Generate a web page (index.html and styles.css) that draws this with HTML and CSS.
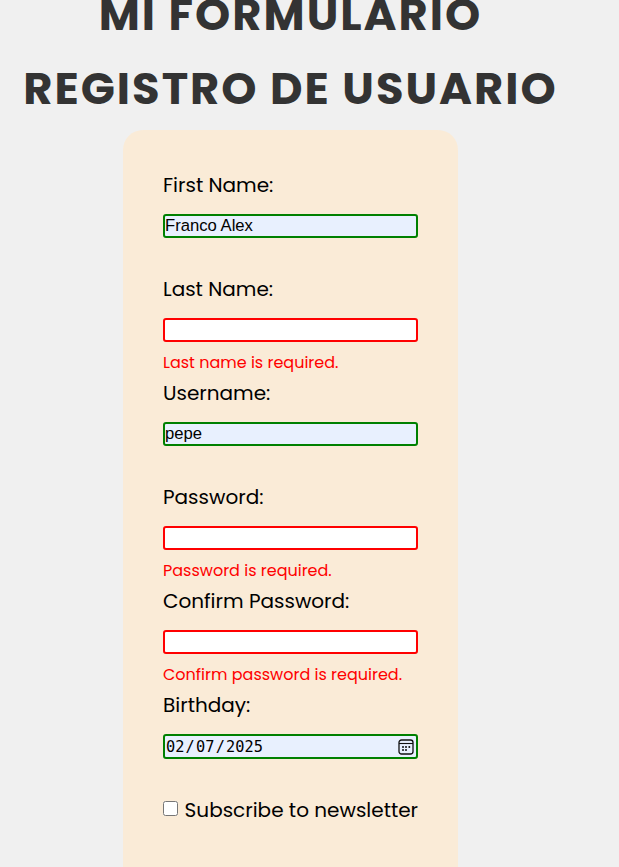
FILE: index.html
```html
<!DOCTYPE html>
<html lang="es">
<head>
<meta charset="utf-8">
<title>Mi formulario</title>
<link rel="stylesheet" href="styles.css">
</head>
<body>
<main class="page">
  <h1 class="title title-top">MI FORMULARIO</h1>
  <h1 class="title">REGISTRO DE USUARIO</h1>
  <form class="card">
    <div class="field">
      <label class="label" for="first">First Name:</label>
      <input class="input valid" id="first" type="text" value="Franco Alex">
    </div>
    <div class="field">
      <label class="label" for="last">Last Name:</label>
      <input class="input invalid" id="last" type="text">
      <p class="error">Last name is required.</p>
    </div>
    <div class="field">
      <label class="label" for="user">Username:</label>
      <input class="input valid" id="user" type="text" value="pepe">
    </div>
    <div class="field">
      <label class="label" for="pass">Password:</label>
      <input class="input invalid" id="pass" type="password">
      <p class="error">Password is required.</p>
    </div>
    <div class="field">
      <label class="label" for="confirm">Confirm Password:</label>
      <input class="input invalid" id="confirm" type="password">
      <p class="error">Confirm password is required.</p>
    </div>
    <div class="field">
      <label class="label">Birthday:</label>
      <div class="input valid date">
        <span>02<span class="sep">/</span>07<span class="sep">/</span>2025</span>
        <svg class="calendar" viewBox="0 0 16 16" width="16" height="16">
          <rect x="1" y="1" width="14" height="14" rx="2.5" fill="none" stroke="#111" stroke-width="1.3"/>
          <path d="M1 4.5h14" stroke="#111" stroke-width="1.1"/>
          <g fill="#111"><circle cx="5" cy="8" r="1"/><circle cx="8" cy="8" r="1"/><circle cx="11.3" cy="8" r="1"/><circle cx="5" cy="11" r="1"/><circle cx="8" cy="11" r="1"/></g>
        </svg>
      </div>
    </div>
    <div class="subscribe">
      <input class="check" id="news" type="checkbox">
      <label class="label" for="news">Subscribe to newsletter</label>
    </div>
  </form>
</main>
</body>
</html>
```
FILE: styles.css
```css
* { box-sizing: border-box; }
html { overflow: hidden; background: #f0f0f0; }
body {
  margin: 0;
  height: 867px;
  overflow: hidden;
  font-family: Poppins, Inter, "Liberation Sans", sans-serif;
  color: #000;
}
.page {
  width: 581px;
  display: flex;
  flex-direction: column;
  align-items: center;
}
.title {
  margin: 0;
  height: 74px;
  line-height: 74px;
  font-size: 44.8px;
  font-weight: 700;
  letter-spacing: 2px;
  color: #333;
  white-space: nowrap;
}
.title-top { margin-top: -22px; }
.card {
  width: 335px;
  height: 737px;
  flex: none;
  margin-top: 4px;
  padding: 40px 40px 0;
  border-radius: 20px 20px 0 0;
  background: #faebd7;
}
.field {
  height: 104px;
  display: flex;
  flex-direction: column;
}
.label {
  height: 30px;
  line-height: 30px;
  font-size: 20px;
  white-space: nowrap;
}
.input {
  width: 255px;
  height: 24px;
  margin: 14px 0 0;
  padding: 0;
  border: 2px solid;
  border-radius: 3px;
  font: 16.67px "Liberation Sans", sans-serif;
  color: #000;
}
.valid { border-color: green; background: #e8f0fe; }
.invalid { border-color: red; background: #fff; }
.error {
  margin: 9px 0 0;
  height: 24px;
  line-height: 24px;
  font-size: 16px;
  color: red;
  white-space: nowrap;
}
.date {
  height: 25px;
  display: flex;
  align-items: center;
  justify-content: space-between;
  padding: 0 2px 0 1px;
  font: 15.3px "DejaVu Sans Mono", monospace;
}
.sep { margin: 0 1.2px; }
.subscribe {
  height: 30px;
  margin-top: 1px;
  display: flex;
  align-items: flex-start;
}
.check { flex: none; width: 15px; height: 15px; margin: 6px 6.6px 0 0; }
```
